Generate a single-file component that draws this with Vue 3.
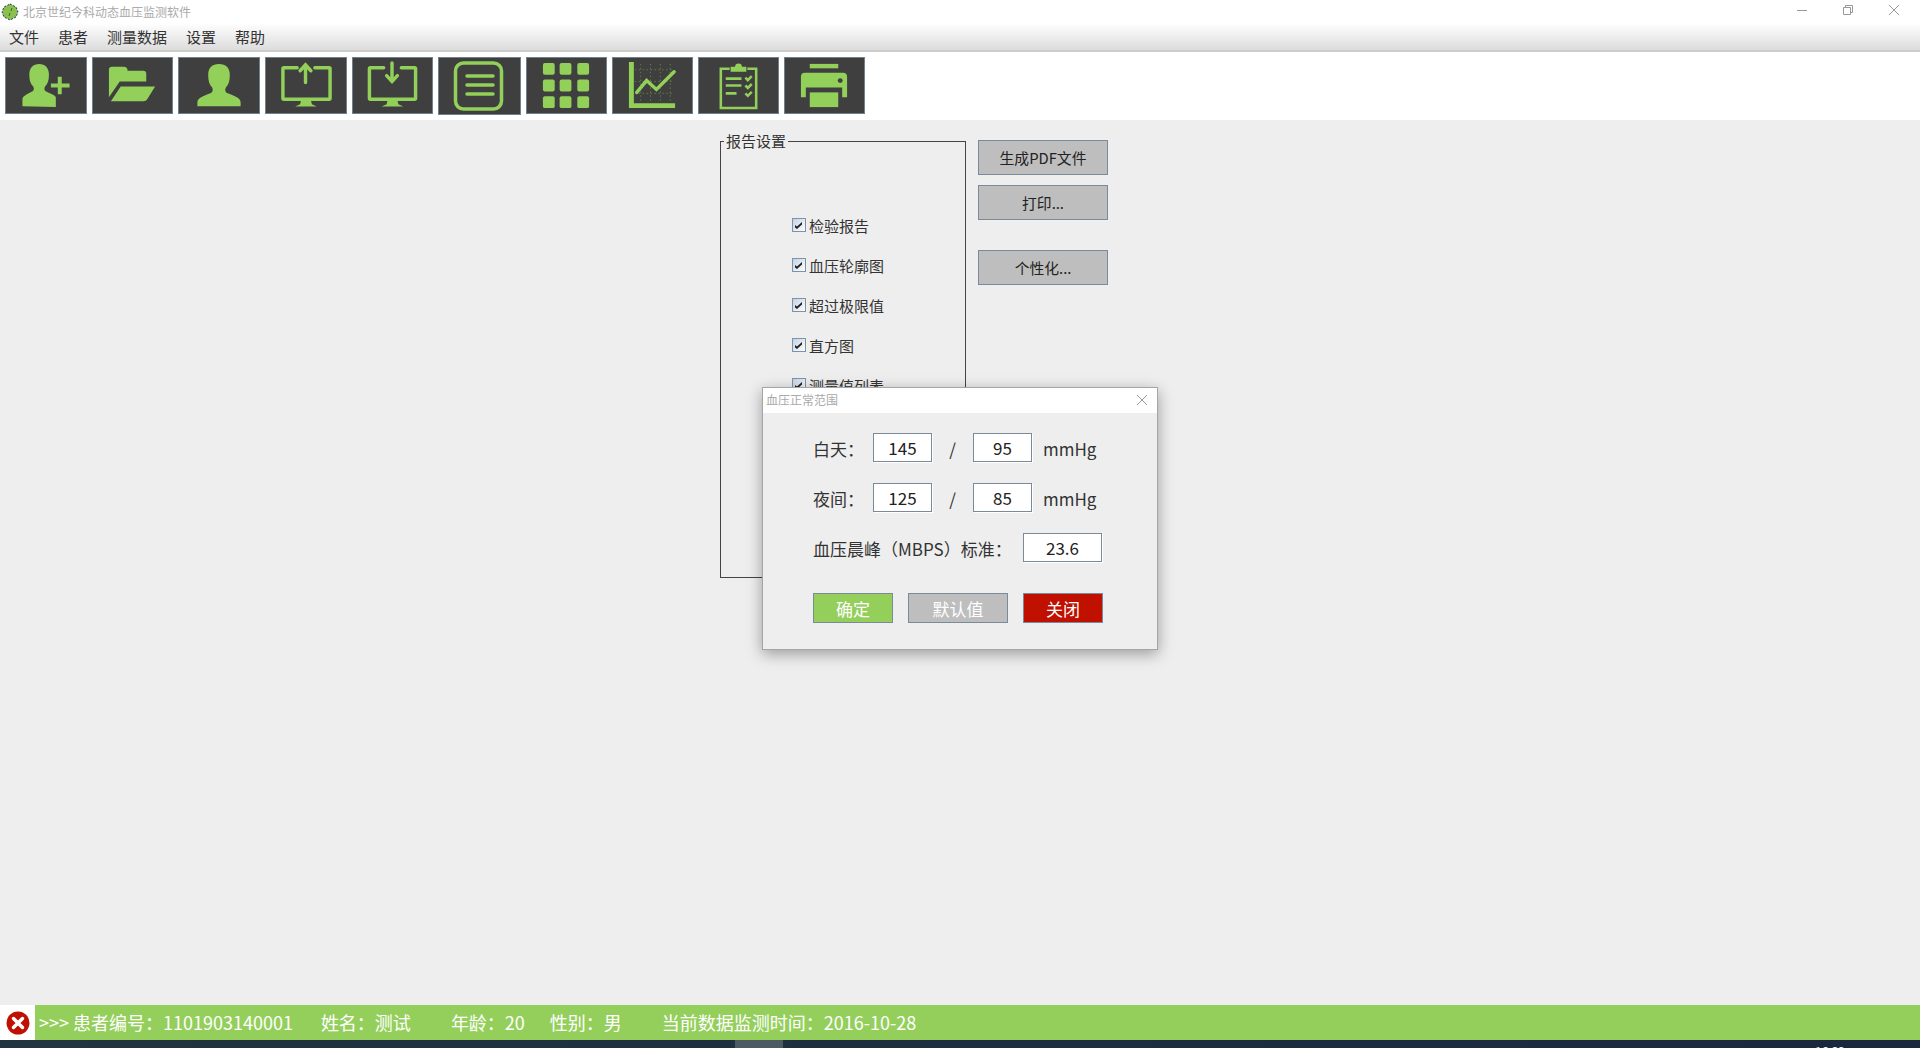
<template>
  <div class="app">
    <!-- title bar -->
    <header class="titlebar">
      <svg class="logo" width="18" height="18" viewBox="0 0 18 18">
        <path d="M9 1l6 3 2 5-2 5-6 3-6-3-2-5 2-5z" fill="#8cc04e" stroke="#1c3a5c" stroke-width="1" stroke-dasharray="2 1.5"/>
        <path d="M11 5l-1 3M9 10l-1 3" stroke="#3c6a2a" stroke-width="1" fill="none"/>
      </svg>
      <span class="app-name">北京世纪今科动态血压监测软件</span>
      <div class="win-controls">
        <svg width="12" height="12" viewBox="0 0 12 12"><path d="M1 6.500h10" stroke="#999" fill="none"/></svg>
        <svg width="12" height="12" viewBox="0 0 12 12"><path d="M1.500 3.500h7v7h-7zM3.500 3.500v-2h7v7h-2" stroke="#999" fill="none"/></svg>
        <svg width="12" height="12" viewBox="0 0 12 12"><path d="M1 1l10 10M11 1L1 11" stroke="#999" fill="none"/></svg>
      </div>
    </header>

    <!-- menu -->
    <nav class="menubar">
      <span v-for="m in menus" :key="m" class="menu-item">{{ m }}</span>
    </nav>

    <!-- toolbar -->
    <div class="toolbar">
      <button class="tool w82">
        <svg viewBox="0 0 80 56">
          <path d="M16 49V42c0-3 4-5 10-8 2-1 2-3 1-5-3-3-4-7-4-12 0-7 4-11 10-11s10 4 10 11c0 5-1 9-4 12-1 2-1 4 1 5 3 1.500 10 4 10 6v10z"/>
          <path d="M45 26h7v-7h4v7h8v4h-8v7h-4v-7h-7z" stroke="#3f3f3f" stroke-width="2" paint-order="stroke"/>
        </svg>
      </button>
      <button class="tool w81">
        <svg viewBox="0 0 80 56">
          <path d="M16 12q0-3 3-3h12q4 0 4 4h16q3 0 3 3v8H27L16 40z"/>
          <path d="M18 44L28 29h35L55 42q-1 2-4 2z"/>
        </svg>
      </button>
      <button class="tool w82">
        <svg viewBox="0 0 80 56">
          <path d="M18 49v-4c0-4 6-6 13-9 3-1 3-4 2-6-3-3-4-7-4-13 0-7 4-11 11-11s11 4 11 11c0 6-1 10-4 13-1 2-1 5 2 6 7 3 13 5 13 9v4z"/>
        </svg>
      </button>
      <button class="tool w82">
        <svg viewBox="0 0 80 56">
          <path class="line" d="M31 10H17.500a1 1 0 0 0-1 1v30a1 1 0 0 0 1 1h46a1 1 0 0 0 1-1V11a1 1 0 0 0-1-1H49"/>
          <path d="M35 43h10l1 4 5 2.500H29l5-2.500z"/>
          <path class="line" d="M39.500 25V8M34 13l5.500-6 5.500 6"/>
        </svg>
      </button>
      <button class="tool w81">
        <svg viewBox="0 0 80 56">
          <path class="line" d="M31 10H17.500a1 1 0 0 0-1 1v30a1 1 0 0 0 1 1h45a1 1 0 0 0 1-1V11a1 1 0 0 0-1-1H49"/>
          <path d="M35 43h10l1 4 5 2.500H29l5-2.500z"/>
          <path class="line" d="M39.500 5v18M34 18l5.500 6 5.500-6"/>
        </svg>
      </button>
      <button class="tool w83">
        <svg viewBox="0 0 81 56">
          <rect class="line" x="16.500" y="5" width="46" height="46" rx="8"/>
          <path class="line" d="M28 18h26M28 27h26M28 36h26"/>
        </svg>
      </button>
      <button class="tool w81">
        <svg viewBox="0 0 80 56">
          <rect v-for="c in gridCells" :key="c.x + '-' + c.y" :x="c.x" :y="c.y" width="12" height="12" rx="2"/>
        </svg>
      </button>
      <button class="tool w81">
        <svg viewBox="0 0 80 56">
          <path class="dots" d="M22 12h40M22 24h40M22 36h40M28 6v40M38 6v40M48 6v40M58 6v40"/>
          <path d="M16 4h5v42h42v5H16z"/>
          <path class="line" d="M24 35l10-12 10 9 18-18"/>
        </svg>
      </button>
      <button class="tool w81">
        <svg viewBox="0 0 80 56">
          <path class="thin" d="M31 11H22v40h36V11h-9"/>
          <path d="M32 14v-5h4.500a3.500 3.500 0 0 1 7 0H48v5z"/>
          <path class="thin" d="M27 21h16M27 28h16M27 36h11M47 20l2.500 2.500 4-4M47 28l2.500 2.500 4-4M47 36l2.500 2.500 4-4"/>
        </svg>
      </button>
      <button class="tool w81">
        <svg viewBox="0 0 80 56">
          <rect x="25" y="6" width="29" height="4.500"/>
          <path d="M16 19q0-4 4-4h39q4 0 4 4v21h-5V30H21v10h-5z"/>
          <rect x="25" y="35" width="29" height="15"/>
          <circle cx="56" cy="23" r="2.500" fill="#3f3f3f"/>
        </svg>
      </button>
    </div>

    <!-- report settings -->
    <main class="content">
      <fieldset class="report-group">
        <legend>报告设置</legend>
        <div class="report-rows">
          <label v-for="r in reports" :key="r" class="check-row">
            <span class="checkbox">
              <svg width="10" height="10" viewBox="0 0 10 10"><path d="M1 5l2 1.500L8 2v2.500L3 9 1 7.500z" fill="#222"/></svg>
            </span>
            {{ r }}
          </label>
        </div>
      </fieldset>
      <div class="side-actions">
        <button class="side-btn">生成PDF文件</button>
        <button class="side-btn">打印...</button>
        <button class="side-btn gap-top">个性化...</button>
      </div>
    </main>

    <!-- status bar -->
    <footer class="statusbar">
      <div class="status-icon">
        <svg width="24" height="24" viewBox="0 0 24 24">
          <circle cx="12" cy="12" r="11.500" fill="#c01000"/>
          <path d="M7.500 7.500l9 9M16.500 7.500l-9 9" stroke="#fff" stroke-width="3.500" stroke-linecap="round"/>
        </svg>
      </div>
      <div class="status-text">
        <span>&gt;&gt;&gt; 患者编号：1101903140001</span>
        <span class="s1">姓名：测试</span>
        <span class="s2">年龄：20</span>
        <span class="s3">性别：男</span>
        <span class="s4">当前数据监测时间：2016-10-28</span>
      </div>
    </footer>
    <div class="taskbar">
      <span class="task-thumb"></span>
      <span class="task-time">16:32</span>
    </div>

    <!-- modal dialog -->
    <div class="dialog">
      <div class="dialog-title">
        <span>血压正常范围</span>
        <svg width="12" height="12" viewBox="0 0 12 12"><path d="M1 1l10 10M11 1L1 11" stroke="#999" fill="none"/></svg>
      </div>
      <div class="dialog-body">
        <div class="form-row">
          <span class="row-label">白天：</span>
          <input class="num" value="145" readonly />
          <span class="slash">/</span>
          <input class="num" value="95" readonly />
          <span class="unit">mmHg</span>
        </div>
        <div class="form-row">
          <span class="row-label">夜间：</span>
          <input class="num" value="125" readonly />
          <span class="slash">/</span>
          <input class="num" value="85" readonly />
          <span class="unit">mmHg</span>
        </div>
        <div class="form-row">
          <span class="row-label wide">血压晨峰（MBPS）标准：</span>
          <input class="num big" value="23.6" readonly />
        </div>
        <div class="dialog-actions">
          <button class="dlg-btn ok">确定</button>
          <button class="dlg-btn def">默认值</button>
          <button class="dlg-btn close">关闭</button>
        </div>
      </div>
    </div>
  </div>
</template>

<script setup>
const menus = ['文件', '患者', '测量数据', '设置', '帮助']
const reports = ['检验报告', '血压轮廓图', '超过极限值', '直方图', '测量值列表']

const gridCells = []
for (const y of [5, 22, 39]) {
  for (const x of [16, 33, 51]) {
    gridCells.push({ x, y })
  }
}
</script>

<style>
html, body {
  margin: 0;
  background: #eee;
}
</style>

<style scoped>
.app {
  position: relative;
  height: 1048px;
  overflow: hidden;
  display: flex;
  flex-direction: column;
  background: #eee;
  color: #333;
  font-family: "Noto Sans CJK SC", "Noto Sans", sans-serif;
}

button {
  font-family: inherit;
  padding: 0;
  cursor: pointer;
}

/* title + menu */
.titlebar {
  height: 23px;
  flex-shrink: 0;
  display: flex;
  align-items: center;
  padding-left: 1px;
  background: #fff;
}

.logo {
  margin-right: 4px;
}

.app-name {
  font-size: 12px;
  color: #aaa;
}

.win-controls {
  margin-left: auto;
  display: flex;
  gap: 34px;
  padding-right: 20px;
  margin-top: -3px;
}

.menubar {
  height: 27px;
  flex-shrink: 0;
  display: flex;
  align-items: center;
  gap: 19px;
  padding-left: 9px;
  background: linear-gradient(#fff, #dcdcdc);
  border-bottom: 2px solid #ccc;
  font-size: 15px;
}

/* toolbar */
.toolbar {
  height: 68px;
  flex-shrink: 0;
  box-sizing: border-box;
  display: flex;
  align-items: flex-start;
  gap: 5px;
  padding: 5px 0 0 5px;
  background: #fff;
}

.tool {
  height: 57px;
  background: #3f3f3f;
  border: 1px solid #708090;
  display: block;
}

.tool.w83 {
  width: 83px;
  height: 58px;
}

.tool.w82 {
  width: 82px;
}

.tool.w81 {
  width: 81px;
}

.tool svg {
  display: block;
  width: 100%;
  height: 100%;
  fill: #92d05a;
}

.tool .line {
  fill: none;
  stroke: #92d05a;
  stroke-width: 3.500;
  stroke-linecap: round;
}

.tool .thin {
  fill: none;
  stroke: #92d05a;
  stroke-width: 2.600;
}

.tool .dots {
  fill: none;
  stroke: #5f8040;
  stroke-width: 1;
  stroke-dasharray: 1.500 2.500;
}

/* report settings */
.content {
  flex: 1;
  display: flex;
  align-items: flex-start;
  gap: 12px;
  padding: 10px 0 0 720px;
}

.report-group {
  width: 246px;
  height: 448px;
  box-sizing: border-box;
  margin: 0;
  padding: 0;
  border: 1px solid #444;
}

.report-group legend {
  margin-left: 3px;
  padding: 0 2px;
  font-size: 15px;
  line-height: 22px;
}

.report-rows {
  padding: 62px 0 0 71px;
  display: flex;
  flex-direction: column;
  gap: 18px;
}

.check-row {
  display: flex;
  align-items: center;
  gap: 3px;
  height: 22px;
  font-size: 15px;
}

.checkbox {
  width: 12px;
  height: 12px;
  display: flex;
  align-items: center;
  justify-content: center;
  border: 1px solid #7b93ad;
  background: linear-gradient(135deg, #c4d2e0, #fff);
}

.side-actions {
  display: flex;
  flex-direction: column;
  gap: 10px;
  padding-top: 10px;
}

.side-btn {
  width: 130px;
  height: 35px;
  border: 1px solid #7a8a9a;
  background: #bebebe;
  color: #222;
  font-size: 14.800px;
}

.side-btn.gap-top {
  margin-top: 20px;
}

/* status bar */
.statusbar {
  height: 35px;
  flex-shrink: 0;
  display: flex;
  background: #94cf5c;
}

.status-icon {
  width: 35px;
  display: flex;
  align-items: center;
  justify-content: center;
  background: #fff;
}

.status-text {
  padding: 0 0 1px 4px;
  display: flex;
  align-items: center;
  font-size: 18px;
  color: #fff;
  white-space: nowrap;
}

.s1 {
  margin-left: 28px;
}

.s2 {
  margin-left: 40px;
}

.s3 {
  margin-left: 25px;
}

.s4 {
  margin-left: 40px;
}

.taskbar {
  height: 8px;
  flex-shrink: 0;
  position: relative;
  overflow: hidden;
  background: linear-gradient(90deg, #20353f, #1a2840);
}

.task-thumb {
  position: absolute;
  left: 735px;
  top: 0;
  width: 48px;
  height: 8px;
  background: #4a5b63;
}

.task-time {
  position: absolute;
  left: 1815px;
  top: 3px;
  font-size: 12px;
  line-height: 16px;
  color: #eee;
}

/* dialog */
.dialog {
  position: absolute;
  left: 762px;
  top: 387px;
  width: 396px;
  height: 263px;
  box-sizing: border-box;
  border: 1px solid #a5a5a5;
  background: #eee;
  box-shadow: 0 4px 14px rgba(0, 0, 0, 0.35);
  display: flex;
  flex-direction: column;
}

.dialog-title {
  height: 25px;
  flex-shrink: 0;
  display: flex;
  align-items: center;
  justify-content: space-between;
  padding: 0 9px 2px 3px;
  box-sizing: border-box;
  background: #fff;
  font-size: 12px;
  color: #aaa;
}

.dialog-body {
  padding: 20px 0 0 50px;
  display: flex;
  flex-direction: column;
  gap: 21px;
  font-size: 17px;
}

.form-row {
  height: 29px;
  display: flex;
  align-items: center;
}

.row-label {
  width: 60px;
  padding-top: 1px;
}

.row-label.wide {
  width: 210px;
}

.num {
  width: 59px;
  height: 29px;
  box-sizing: border-box;
  padding: 0;
  border: 1px solid #7a8a9a;
  box-shadow: 1px 1px 0 #fff;
  outline: none;
  background: #fff;
  color: #222;
  text-align: center;
  font-family: inherit;
  font-size: 17px;
}

.num.big {
  width: 79px;
}

.slash {
  width: 41px;
  padding-top: 1px;
  text-align: center;
}

.unit {
  margin-left: 11px;
  padding-top: 1px;
}

.dialog-actions {
  display: flex;
  gap: 15px;
  margin-top: 10px;
}

.dlg-btn {
  height: 30px;
  border: 1px solid #7a8a9a;
  color: #fff;
  font-size: 17px;
}

.dlg-btn.ok {
  width: 80px;
  background: #94cf5c;
}

.dlg-btn.def {
  width: 100px;
  background: #bebebe;
}

.dlg-btn.close {
  width: 80px;
  background: #c01000;
}
</style>
